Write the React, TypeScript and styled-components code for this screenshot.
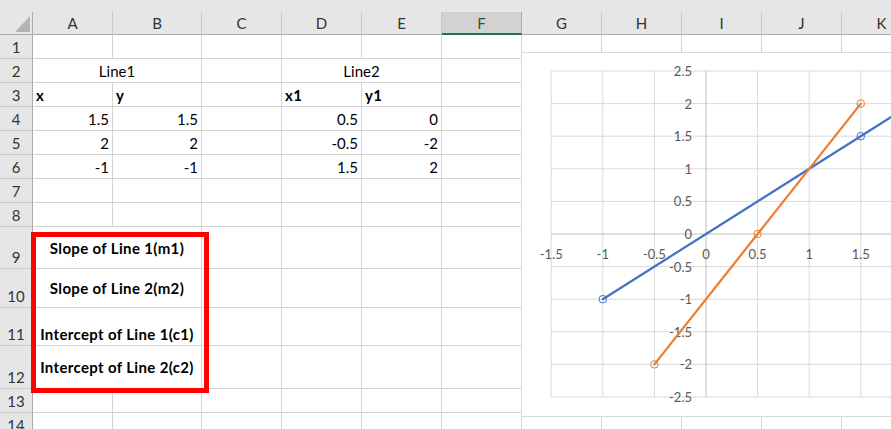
import React from 'react';
import styled, { createGlobalStyle } from 'styled-components';

const GlobalStyle = createGlobalStyle`
  html, body { margin: 0; padding: 0; background: #fff; overflow: hidden; }
  body { font-family: Lato, "Open Sans", "Liberation Sans", sans-serif; }
`;

const COLS = ['A', 'B', 'C', 'D', 'E', 'F', 'G', 'H', 'I', 'J', 'K'];
const COL_W = [80, 89, 80, 80, 80, 80, 80, 80, 80, 80, 80];
const ROW_H = [24, 24, 24, 24, 24, 24, 24, 24, 42, 39, 38, 43, 24, 24];

type Align = 'left' | 'center' | 'right';
type VAlign = 'center' | 'bottom';
type CellDef = { text: string; span?: number; align?: Align; bold?: boolean; valign?: VAlign };

const num = (text: string): CellDef => ({ text, align: 'right' });

const CELLS: Record<string, CellDef> = {
  A2: { text: 'Line1', span: 2, align: 'center' },
  D2: { text: 'Line2', span: 2, align: 'center' },
  A3: { text: 'x', bold: true },
  B3: { text: 'y', bold: true },
  D3: { text: 'x1', bold: true },
  E3: { text: 'y1', bold: true },
  A4: num('1.5'), B4: num('1.5'), D4: num('0.5'), E4: num('0'),
  A5: num('2'), B5: num('2'), D5: num('-0.5'), E5: num('-2'),
  A6: num('-1'), B6: num('-1'), D6: num('1.5'), E6: num('2'),
  A9: { text: 'Slope of Line 1(m1)', span: 2, align: 'center', bold: true, valign: 'center' },
  A10: { text: 'Slope of Line 2(m2)', span: 2, align: 'center', bold: true, valign: 'center' },
  A11: { text: 'Intercept of Line 1(c1)', span: 2, align: 'center', bold: true },
  A12: { text: 'Intercept of Line 2(c2)', span: 2, align: 'center', bold: true, valign: 'center' },
};

const Sheet = styled.div`
  position: relative;
  display: grid;
  grid-template-columns: 33px ${COL_W.map((w) => `${w}px`).join(' ')};
  grid-template-rows: 12px 23px ${ROW_H.map((h) => `${h}px`).join(' ')};
  width: max-content;
`;

const TopBand = styled.div`
  grid-column: 1 / -1;
  background: #e6e6e6;
`;

const Corner = styled.div`
  box-sizing: border-box;
  background: #e6e6e6;
  border-right: 1px solid #ababab;
  border-bottom: 1px solid #ababab;
  display: flex;
  justify-content: flex-end;
  align-items: flex-end;
  padding: 0 2px 2px 0;
`;

const CornerTriangle = styled.div`
  width: 15px;
  height: 16px;
  background: #b4b4b4;
  clip-path: polygon(100% 0, 100% 100%, 0 100%);
`;

const ColHead = styled.div<{ $selected?: boolean }>`
  box-sizing: border-box;
  background: ${(p) => (p.$selected ? '#d2d2d2' : '#e6e6e6')};
  border-right: 1px solid ${(p) => (p.$selected ? '#ababab' : '#c8c8c8')};
  border-bottom: ${(p) => (p.$selected ? '2px solid #217346' : '1px solid #ababab')};
  display: flex;
  align-items: center;
  justify-content: center;
  font-size: 15px;
  color: ${(p) => (p.$selected ? '#1f5c3a' : '#333')};
  padding-top: ${(p) => (p.$selected ? 1 : 0)}px;
`;

const RowHead = styled.div`
  box-sizing: border-box;
  background: #e6e6e6;
  border-right: 1px solid #ababab;
  border-bottom: 1px solid #c8c8c8;
  display: flex;
  align-items: flex-end;
  justify-content: center;
  padding-bottom: 2px;
  font-size: 15px;
  line-height: 18px;
  color: #333;
`;

const Cell = styled.div<{ $span: number; $align: Align; $bold: boolean; $valign: VAlign }>`
  grid-column: span ${(p) => p.$span};
  box-sizing: border-box;
  border-right: 1px solid #d4d4d4;
  border-bottom: 1px solid #d4d4d4;
  display: flex;
  align-items: ${(p) => (p.$valign === 'center' ? 'center' : 'flex-end')};
  justify-content: ${(p) =>
    p.$align === 'center' ? 'center' : p.$align === 'right' ? 'flex-end' : 'flex-start'};
  padding: 0 3px ${(p) => (p.$valign === 'center' ? 0 : 2)}px 3px;
  font-size: 15px;
  line-height: 18px;
  font-weight: ${(p) => (p.$bold ? 700 : 400)};
  letter-spacing: ${(p) => (p.$bold ? '0.35px' : 'normal')};
  color: #000;
  white-space: nowrap;
`;

const RedBox = styled.div`
  position: absolute;
  left: 31px;
  top: 232px;
  width: 178px;
  height: 161px;
  box-sizing: border-box;
  border: 5px solid #ff0000;
  pointer-events: none;
`;

const ChartFrame = styled.div`
  position: absolute;
  left: 521px;
  top: 52px;
  width: 400px;
  height: 363px;
  background: #fff;
  border: 1px solid #d9d9d9;
`;

const X0 = 184;
const Y0 = 181;
const SX = 103.2;
const SY = 65.2;
const px = (v: number) => X0 + v * SX;
const py = (v: number) => Y0 - v * SY;

const XT = [-1.5, -1, -0.5, 0, 0.5, 1, 1.5, 2];
const XL = [-1.5, -1, -0.5, 0, 0.5, 1, 1.5];
const YT = [2.5, 2, 1.5, 1, 0.5, 0, -0.5, -1, -1.5, -2, -2.5];

const BLUE = '#4472c4';
const ORANGE = '#ed7d31';

const Chart: React.FC = () => (
  <ChartFrame>
    <svg width={400} height={363} viewBox="0 0 400 363">
      {XT.filter((v) => v !== 0).map((v) => (
        <line key={`vx${v}`} x1={px(v)} x2={px(v)} y1={py(2.5)} y2={py(-2.5)} stroke="#d9d9d9" strokeWidth={1} />
      ))}
      {YT.filter((v) => v !== 0).map((v) => (
        <line key={`hy${v}`} x1={px(-1.5)} x2={px(2)} y1={py(v)} y2={py(v)} stroke="#d9d9d9" strokeWidth={1} />
      ))}
      <line x1={px(0)} x2={px(0)} y1={py(2.5)} y2={py(-2.5)} stroke="#bfbfbf" strokeWidth={1} />
      <line x1={px(-1.5)} x2={px(2)} y1={py(0)} y2={py(0)} stroke="#bfbfbf" strokeWidth={1} />
      <g fontFamily="Lato, 'Open Sans', sans-serif" fontSize={13} fill="#595959">
        {YT.map((v) => (
          <text key={`ly${v}`} x={170} y={py(v)} textAnchor="end" dominantBaseline="central">
            {String(v)}
          </text>
        ))}
        {XL.map((v) => (
          <text key={`lx${v}`} x={px(v)} y={201} textAnchor="middle" dominantBaseline="central">
            {String(v)}
          </text>
        ))}
      </g>
      <line x1={px(-1)} y1={py(-1)} x2={px(2)} y2={py(2)} stroke={BLUE} strokeWidth={2.25} strokeLinecap="round" />
      {[[-1, -1], [1.5, 1.5], [2, 2]].map(([x, y]) => (
        <circle key={`b${x}`} cx={px(x)} cy={py(y)} r={3.75} fill="none" stroke={BLUE} strokeWidth={1} />
      ))}
      <line x1={px(-0.5)} y1={py(-2)} x2={px(1.5)} y2={py(2)} stroke={ORANGE} strokeWidth={2.25} strokeLinecap="round" />
      {[[0.5, 0], [-0.5, -2], [1.5, 2]].map(([x, y]) => (
        <circle key={`o${x}`} cx={px(x)} cy={py(y)} r={3.75} fill="none" stroke={ORANGE} strokeWidth={1} />
      ))}
    </svg>
  </ChartFrame>
);

export default function App() {
  const rows: React.ReactNode[] = [];
  ROW_H.forEach((_, ri) => {
    const r = ri + 1;
    rows.push(<RowHead key={`rh${r}`}>{r}</RowHead>);
    let skip = 0;
    COLS.forEach((c) => {
      if (skip > 0) {
        skip -= 1;
        return;
      }
      const def = CELLS[`${c}${r}`];
      const span = def?.span ?? 1;
      skip = span - 1;
      rows.push(
        <Cell
          key={`${c}${r}`}
          $span={span}
          $align={def?.align ?? 'left'}
          $bold={!!def?.bold}
          $valign={def?.valign ?? 'bottom'}
        >
          {def?.text ?? ''}
        </Cell>
      );
    });
  });

  return (
    <>
      <GlobalStyle />
      <Sheet>
        <TopBand />
        <Corner>
          <CornerTriangle />
        </Corner>
        {COLS.map((c) => (
          <ColHead key={c} $selected={c === 'F'}>
            {c}
          </ColHead>
        ))}
        {rows}
        <RedBox />
        <Chart />
      </Sheet>
    </>
  );
}
